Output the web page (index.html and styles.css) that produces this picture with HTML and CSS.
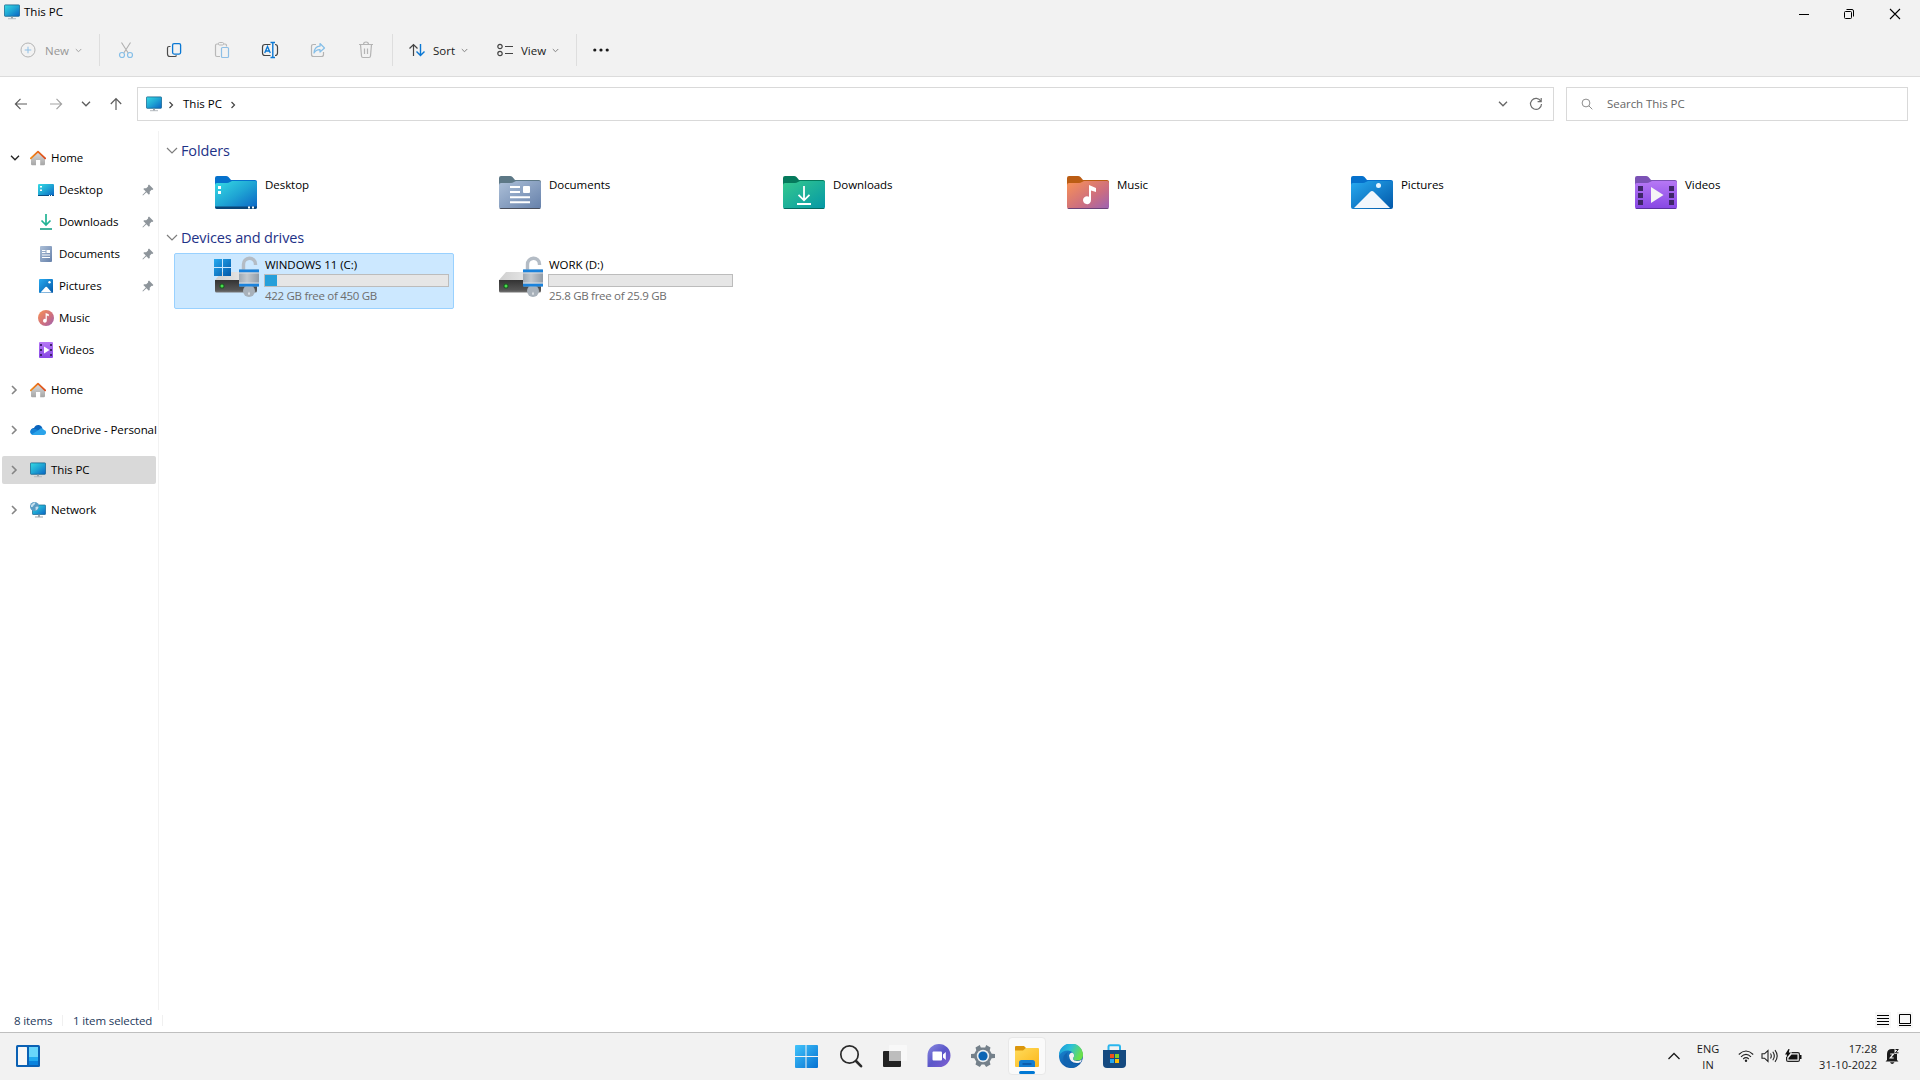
FILE: index.html
```
<!DOCTYPE html>
<html lang="en">
<head>
    <meta charset="UTF-8">
    <meta name="viewport" content="width=device-width, initial-scale=1.0">
    <title>This PC</title>
    <link rel="stylesheet" href="styles.css">
</head>
<body>

    <!-- Shared gradients and symbols -->
    <svg class="defs" width="0" height="0">
        <defs>
            <linearGradient id="gScreen" x1="0" y1="0" x2="1" y2="1"><stop offset="0" stop-color="#37dbe4"/><stop offset="0.5" stop-color="#1fa5d4"/><stop offset="1" stop-color="#0a62c4"/></linearGradient>
            <linearGradient id="gDocs" x1="0" y1="0" x2="1" y2="1"><stop offset="0" stop-color="#adc0d8"/><stop offset="1" stop-color="#6580aa"/></linearGradient>
            <linearGradient id="gDown" x1="0" y1="0" x2="1" y2="1"><stop offset="0" stop-color="#35c98e"/><stop offset="1" stop-color="#0497a6"/></linearGradient>
            <linearGradient id="gMusic" x1="0" y1="0" x2="1" y2="1"><stop offset="0" stop-color="#fa9354"/><stop offset="0.6" stop-color="#cc6e80"/><stop offset="1" stop-color="#9b62b4"/></linearGradient>
            <linearGradient id="gPics" x1="0" y1="0" x2="1" y2="1"><stop offset="0" stop-color="#27aaf0"/><stop offset="1" stop-color="#0257a8"/></linearGradient>
            <linearGradient id="gVideo" x1="0" y1="0" x2="0" y2="1"><stop offset="0" stop-color="#b678f5"/><stop offset="1" stop-color="#8646e4"/></linearGradient>
            <linearGradient id="gWin" x1="0" y1="0" x2="1" y2="1"><stop offset="0" stop-color="#42c4fb"/><stop offset="1" stop-color="#0571d2"/></linearGradient>
            <linearGradient id="gRoof" x1="0" y1="0" x2="1" y2="0"><stop offset="0" stop-color="#f28c1a"/><stop offset="1" stop-color="#dc4a1f"/></linearGradient>
            <linearGradient id="gWall" x1="0" y1="0" x2="0" y2="1"><stop offset="0" stop-color="#dedede"/><stop offset="1" stop-color="#a6a6a6"/></linearGradient>
            <linearGradient id="gTop" x1="0" y1="0" x2="1" y2="0"><stop offset="0" stop-color="#cfcfcf"/><stop offset="1" stop-color="#f2f2f2"/></linearGradient>
            <linearGradient id="gDrive" x1="0" y1="0" x2="0" y2="1"><stop offset="0" stop-color="#333"/><stop offset="0.8" stop-color="#555"/><stop offset="1" stop-color="#777"/></linearGradient>
            <linearGradient id="gLock" x1="0" y1="0" x2="1" y2="0"><stop offset="0" stop-color="#9fa9b3"/><stop offset="0.4" stop-color="#c2c8ce"/><stop offset="1" stop-color="#929ca7"/></linearGradient>
            <linearGradient id="gChat" x1="0" y1="0" x2="1" y2="1"><stop offset="0" stop-color="#8b8be0"/><stop offset="0.5" stop-color="#5b57c9"/><stop offset="1" stop-color="#8260d2"/></linearGradient>
            <linearGradient id="gEdge" x1="0" y1="0" x2="1" y2="0.4"><stop offset="0" stop-color="#1593dc"/><stop offset="0.5" stop-color="#2dc0d8"/><stop offset="1" stop-color="#6be04c"/></linearGradient>
            <linearGradient id="gEdge2" x1="0" y1="0" x2="0.6" y2="1"><stop offset="0" stop-color="#1b93dc"/><stop offset="1" stop-color="#0d4f9f"/></linearGradient>
            <linearGradient id="gFold" x1="0" y1="0" x2="1" y2="1"><stop offset="0" stop-color="#ffdc5c"/><stop offset="1" stop-color="#fcb619"/></linearGradient>
        </defs>
        <symbol id="pc" viewBox="0 0 16 16">
            <rect x="0.4" y="0.9" width="15.2" height="11.4" rx="0.8" fill="url(#gScreen)" stroke="#15648e" stroke-width="0.8"/>
            <path d="M7 12.700h2v2H7z" fill="#9aa3aa"/><path d="M4 14.200h8v1H4z" fill="#b4babf"/>
        </symbol>
        <symbol id="home" viewBox="0 0 16 16">
            <path d="M1 7.500 8 1.500l7 6V14q0 1.200-1.200 1.200H10.200V10H6v5.200H2.200Q1 15.200 1 14z" fill="url(#gWall)"/>
            <path d="M0.800 8.300 8 1.600l7.200 6.700" fill="none" stroke="url(#gRoof)" stroke-width="1.800" stroke-linecap="round" stroke-linejoin="round"/>
        </symbol>
        <symbol id="pin" viewBox="0 0 12 12">
            <path d="M7 .6 11.400 5l-1 .9-.8-.1-1.900 2 .1 2-.9.900-2.500-2.500L1 11.600.4 11l3.400-3.400L1.300 5.100l.9-.9 2 .1 1.900-1.900-.1-.8z" fill="#8e959b"/>
        </symbol>
        <symbol id="chev-r" viewBox="0 0 8 10">
            <path d="M2 1l4 4-4 4" fill="none" stroke="currentColor" stroke-width="1.600"/>
        </symbol>
        <symbol id="chev-d" viewBox="0 0 10 6">
            <path d="M1 .8l4 4 4-4" fill="none" stroke="currentColor" stroke-width="1.300"/>
        </symbol>
        <symbol id="drive" viewBox="0 0 48 44">
            <path d="M8 17h35l1 8H1z" fill="url(#gTop)"/>
            <path d="M1 25h42v11q0 1.500-1.500 1.500h-39Q1 37.500 1 36z" fill="url(#gDrive)"/>
            <circle cx="8" cy="31" r="2.600" fill="#1c5c22"/><circle cx="8" cy="31" r="1.500" fill="#47e04c"/>
            <path d="M29.500 15V9.500a6 6 0 0 1 12-.5v1" fill="none" stroke="#b4bcc5" stroke-width="3.400"/>
            <circle cx="35" cy="36" r="6" fill="#a8b1ba"/>
            <path d="M35 36.500l1 3h-2z" fill="#f4f6f8"/>
            <rect x="25" y="14.500" width="20" height="17" rx="1" fill="url(#gLock)"/>
            <path d="M25 14.500h20v3H25zM25 28.500h20v3H25z" fill="#1b83dc"/>
            <path d="M25 17.500h20v1H25zM25 27.500h20v1H25z" fill="#d9dee3"/>
        </symbol>
    </svg>

    <!-- Title bar and command bar -->
    <header class="header">
        <div class="titlebar">
            <svg width="16" height="16"><use href="#pc"/></svg>
            <span class="title">This PC</span>
            <div class="window-buttons">
                <svg width="12" height="12" viewBox="0 0 12 12"><path d="M2 6.500h10" stroke="#000"/></svg>
                <svg width="12" height="12" viewBox="0 0 12 12" fill="none" stroke="#000"><rect x="1.500" y="3.500" width="7" height="7" rx="1"/><path d="M3.500 1.500H9Q10.500 1.500 10.500 3v5.500"/></svg>
                <svg width="12" height="12" viewBox="0 0 12 12"><path d="M1 1l10 10M11 1L1 11" stroke="#000" stroke-width="1.100"/></svg>
            </div>
        </div>
        <div class="toolbar">
            <div class="tool tool-new disabled">
                <svg width="16" height="16" viewBox="0 0 16 16" fill="none"><circle cx="8" cy="8" r="7" stroke="#b4b4b4"/><path d="M8 4.700v6.600M4.700 8h6.600" stroke="#8ebfe6"/></svg>
                <span>New</span>
                <svg class="caret" width="7" height="5" viewBox="0 0 10 6"><use href="#chev-d"/></svg>
            </div>
            <div class="sep"></div>
            <div class="icon-tools">
                <svg width="16" height="18" viewBox="0 0 16 18" fill="none"><path d="M3.500 1.500l6.700 10.500M12.500 1.500L5.800 12" stroke="#b0b0b0" stroke-width="1.100"/><circle cx="4" cy="14" r="2.500" stroke="#86bfe8" stroke-width="1.200"/><circle cx="12" cy="14" r="2.500" stroke="#86bfe8" stroke-width="1.200"/></svg>
                <svg width="16" height="18" viewBox="0 0 16 18" fill="none"><path d="M4.500 5.500H3Q1.500 5.500 1.500 7v6q0 2.500 2.500 2.500h5q1.300 0 1.300-1.300" stroke="#4a4a4a" stroke-width="1.200"/><rect x="6.600" y="2.600" width="8" height="10.500" rx="1.500" stroke="#0a78d4" stroke-width="1.300"/></svg>
                <svg width="16" height="18" viewBox="0 0 16 18" fill="none"><path d="M4.500 3H3Q1.500 3 1.500 4.500V14q0 1.500 1.500 1.500h3M9.500 3H11q1.500 0 1.500 1.500v1" stroke="#b8b8b8" stroke-width="1.200"/><rect x="4.500" y="1.500" width="5" height="2.500" rx="1" stroke="#b8b8b8"/><rect x="7.500" y="6.500" width="7" height="10" rx="1" stroke="#8ebfe6" stroke-width="1.200"/></svg>
                <svg width="18" height="18" viewBox="0 0 18 18" fill="none"><path d="M9.500 3.500H4Q1.500 3.500 1.500 6v6q0 2.500 2.500 2.500h5.500M14 3.500q2.500 0 2.500 2.500v6q0 2.500-2.500 2.500" stroke="#444" stroke-width="1.200"/><path d="M3.700 12L6.500 5.500 9.300 12M4.700 10h3.600" stroke="#0a78d4" stroke-width="1.300"/><path d="M11.800 1.500v15M9.500 1.500h4.500M9.500 16.500h4.500" stroke="#0a78d4" stroke-width="1.400"/></svg>
                <svg width="16" height="18" viewBox="0 0 16 18" fill="none"><path d="M6 3.500H3.500Q1.500 3.500 1.500 5.500v8q0 2 2 2h8q2 0 2-2V11" stroke="#b4b4b4" stroke-width="1.200"/><path d="M10 2.500l4.500 4.500-4.500 4V8.700Q6 8.500 4 12 4.500 5.500 10 5.200z" stroke="#86bfe8" stroke-width="1.200" stroke-linejoin="round"/></svg>
                <svg width="16" height="18" viewBox="0 0 16 18" fill="none" stroke="#b4b4b4" stroke-width="1.200"><path d="M1 3.500h14M5.500 3.500Q5.500 1 8 1t2.500 2.500M2.500 3.500l1 11.500q.1 1.500 1.500 1.500h6q1.400 0 1.500-1.500l1-11.500M6.500 7.500v5.500M9.500 7.500v5.500"/></svg>
            </div>
            <div class="sep"></div>
            <div class="tool tool-sort">
                <svg width="18" height="16" viewBox="0 0 18 16" fill="none" stroke-width="1.200"><path d="M5.500 14V2.500M1.500 6.500l4-4 4 4" stroke="#444"/><path d="M12.500 2v11.500M8.500 9.500l4 4 4-4" stroke="#0a78d4" stroke-width="1.400"/></svg>
                <span>Sort</span>
                <svg class="caret" width="7" height="5" viewBox="0 0 10 6"><use href="#chev-d"/></svg>
            </div>
            <div class="tool tool-view">
                <svg width="18" height="16" viewBox="0 0 18 16" fill="none" stroke="#444" stroke-width="1.200"><circle cx="4" cy="4.500" r="2.200"/><circle cx="4" cy="11.500" r="2.200"/><path d="M9 4.500h8M9 11.500h8"/></svg>
                <span>View</span>
                <svg class="caret" width="7" height="5" viewBox="0 0 10 6"><use href="#chev-d"/></svg>
            </div>
            <div class="sep"></div>
            <svg class="more" width="18" height="6" viewBox="0 0 18 6" fill="#1a1a1a"><circle cx="2.800" cy="3" r="1.600"/><circle cx="9" cy="3" r="1.600"/><circle cx="15.200" cy="3" r="1.600"/></svg>
        </div>
    </header>

    <!-- Address and search -->
    <div class="navbar">
        <div class="nav-buttons">
            <svg width="14" height="14" viewBox="0 0 14 14" fill="none" stroke="#5c5c5c" stroke-width="1.200"><path d="M1.500 7h11.500M6.500 1.800L1.400 7l5.100 5.200"/></svg>
            <svg width="14" height="14" viewBox="0 0 14 14" fill="none" stroke="#a3a3a3" stroke-width="1.200"><path d="M1 7h11.500M7.500 1.800L12.600 7l-5.100 5.200"/></svg>
            <svg class="recent" width="10" height="6"><use href="#chev-d"/></svg>
            <svg width="14" height="14" viewBox="0 0 14 14" fill="none" stroke="#5c5c5c" stroke-width="1.200"><path d="M7 13V1.800M1.800 7L7 1.700 12.200 7"/></svg>
        </div>
        <div class="address">
            <svg width="16" height="16"><use href="#pc"/></svg>
            <svg class="crumb" width="6" height="8" viewBox="0 0 8 10"><use href="#chev-r"/></svg>
            <span>This PC</span>
            <svg class="crumb last" width="6" height="8" viewBox="0 0 8 10"><use href="#chev-r"/></svg>
            <svg class="history" width="10" height="6"><use href="#chev-d"/></svg>
            <svg class="refresh" width="14" height="14" viewBox="0 0 14 14" fill="none" stroke="#6e6e6e" stroke-width="1.200"><path d="M11.800 4.200A5.500 5.500 0 1 0 12.500 7M12.200 1v3.600H8.600"/></svg>
        </div>
        <div class="search">
            <svg width="12" height="12" viewBox="0 0 12 12" fill="none" stroke="#8d8d8d"><circle cx="5" cy="5" r="3.900"/><path d="M7.800 7.800l3.500 3.500"/></svg>
            <span>Search This PC</span>
        </div>
    </div>

    <main class="main">
        <!-- Navigation pane -->
        <nav class="sidebar">
            <div class="node open"><svg class="arrow" width="10" height="6"><use href="#chev-d"/></svg><svg width="16" height="16"><use href="#home"/></svg><span>Home</span></div>
            <div class="node child">
                <svg width="16" height="16" viewBox="0 0 16 16"><rect y="2" width="16" height="12" rx="1" fill="url(#gScreen)"/><path d="M0 13h16v.5q0 .5-.5.5h-15q-.5 0-.5-.5z" fill="#0a4f86"/><path d="M2 4h2v1.500H2zM2 7.500h2V9H2zM11 13h1v1h-1zM13 13h1v1h-1z" fill="#fff"/></svg>
                <span>Desktop</span><svg class="pin" width="12" height="12"><use href="#pin"/></svg>
            </div>
            <div class="node child">
                <svg width="16" height="16" viewBox="0 0 16 16" fill="none"><path d="M8 0v10.500M3.500 6.500L8 11l4.500-4.500" stroke="#22b394" stroke-width="1.700"/><path d="M2 15h12" stroke="#14a085" stroke-width="1.600"/></svg>
                <span>Downloads</span><svg class="pin" width="12" height="12"><use href="#pin"/></svg>
            </div>
            <div class="node child">
                <svg width="16" height="16" viewBox="0 0 16 16"><rect x="2" width="12" height="16" rx="1" fill="url(#gDocs)"/><path d="M4 4.500h3.500M4 6.500h3.500M4 9h8M4 11.500h8" stroke="#fff"/><path d="M8.500 4H12v3H8.500z" fill="#fff"/></svg>
                <span>Documents</span><svg class="pin" width="12" height="12"><use href="#pin"/></svg>
            </div>
            <div class="node child">
                <svg width="16" height="16" viewBox="0 0 16 16"><rect x="1" y="1" width="14" height="14" rx="1" fill="url(#gPics)"/><path d="M2.500 14.500L7.500 9q.7-.7 1.400 0l4.900 5.500z" fill="#fff"/><circle cx="11.500" cy="4.300" r="1.200" fill="#fff"/></svg>
                <span>Pictures</span><svg class="pin" width="12" height="12"><use href="#pin"/></svg>
            </div>
            <div class="node child">
                <svg width="16" height="16" viewBox="0 0 16 16"><circle cx="8" cy="8" r="8" fill="url(#gMusic)"/><path d="M7.600 3l3.200 1.200v2L8.800 5.600v5A1.900 1.900 0 1 1 7.600 9z" fill="#fff"/></svg>
                <span>Music</span>
            </div>
            <div class="node child">
                <svg width="16" height="16" viewBox="0 0 16 16"><rect x="1" width="14" height="16" rx="1" fill="url(#gVideo)"/><path d="M2 2h2v2H2zM2 7h2v2H2zM2 12h2v2H2zM12 2h2v2h-2zM12 7h2v2h-2zM12 12h2v2h-2z" fill="#40236f"/><path d="M6 4.500L11.500 8 6 11.500z" fill="#fff"/></svg>
                <span>Videos</span>
            </div>
            <div class="node root"><svg class="arrow" width="8" height="10"><use href="#chev-r"/></svg><svg width="16" height="16"><use href="#home"/></svg><span>Home</span></div>
            <div class="node root">
                <svg class="arrow" width="8" height="10"><use href="#chev-r"/></svg>
                <svg width="16" height="16" viewBox="0 0 16 16"><path d="M1 10.500Q-.3 6.500 4 6 5.500 2.400 9 3q2.500.4 3.500 3.200L8 11z" fill="#0a64bd"/><path d="M3 13q-2.500-.5-3-3 1-3.500 4.500-3.300l4 1.600L3 13z" fill="#1482d6"/><path d="M3 13q-.8 0-1.500-.5L9 7.800q3-3 5 .2 2.500.5 2 3.200-.5 1.800-2.200 1.800z" fill="#2ba4ea"/></svg>
                <span>OneDrive - Personal</span>
            </div>
            <div class="node root selected"><svg class="arrow" width="8" height="10"><use href="#chev-r"/></svg><svg width="16" height="16"><use href="#pc"/></svg><span>This PC</span></div>
            <div class="node root">
                <svg class="arrow" width="8" height="10"><use href="#chev-r"/></svg>
                <svg width="16" height="16" viewBox="0 0 16 16"><rect x="2.500" y="3" width="13" height="9.500" rx=".6" fill="url(#gScreen)" stroke="#15648e" stroke-width=".7"/><path d="M8 12.700h2v2H8zM5 14.600h8v1H5z" fill="#9aa3aa"/><circle cx="4.500" cy="4.500" r="4.500" fill="#5b9cc4"/><path d="M1 3q2.500-3 4-2.500Q6 2 3.500 3.500 3 5.500 1 5zM5.500 5q2-1 3 0-.5 2.500-2.800 3.500z" fill="#c4e0ee"/></svg>
                <span>Network</span>
            </div>
        </nav>

        <!-- Files and drives -->
        <section class="content">
            <h2 class="group"><svg width="12" height="8" viewBox="0 0 12 8"><path d="M1 1l5 5 5-5" fill="none" stroke="#7d7d7d" stroke-width="1.200"/></svg>Folders</h2>
            <div class="tiles folders">
                <div class="tile">
                    <svg width="42" height="34" viewBox="0 0 42 34"><path d="M0 2q0-2 2-2h9q1.500 0 2.500 1l2.500 3H40q2 0 2 2v4H0z" fill="#0671cc"/><path d="M0 9q0-2 2-2h10q1.500 0 3-1l2-1H40q2 0 2 2v24q0 2-2 2H2q-2 0-2-2z" fill="url(#gScreen)"/><path d="M0 30.500h42v.5q0 2-2 2H2q-2 0-2-2z" fill="#0a4577"/><path d="M3 10h3v3H3zM3 15h3v3H3zM33 30.500h2v2h-2zM37 30.500h2v2h-2z" fill="#fff"/></svg>
                    <span>Desktop</span>
                </div>
                <div class="tile">
                    <svg width="42" height="34" viewBox="0 0 42 34"><path d="M0 2q0-2 2-2h9q1.500 0 2.500 1l2.500 3H40q2 0 2 2v4H0z" fill="#5d7886"/><path d="M0 9q0-2 2-2h10q1.500 0 3-1l2-1H40q2 0 2 2v24q0 2-2 2H2q-2 0-2-2z" fill="url(#gDocs)"/><path d="M.5 32h41q-.5 1-1.500 1H2q-1 0-1.500-1z" fill="#4a4f5c"/><path d="M11 11h10M11 16h10M11 21.200h20M11 26.200h20" stroke="#fff" stroke-width="2"/><rect x="24" y="10" width="7" height="7" rx="1" fill="#fff"/></svg>
                    <span>Documents</span>
                </div>
                <div class="tile">
                    <svg width="42" height="34" viewBox="0 0 42 34"><path d="M0 2q0-2 2-2h9q1.500 0 2.500 1l2.500 3H40q2 0 2 2v4H0z" fill="#057a5c"/><path d="M0 9q0-2 2-2h10q1.500 0 3-1l2-1H40q2 0 2 2v24q0 2-2 2H2q-2 0-2-2z" fill="url(#gDown)"/><path d="M.5 32h41q-.5 1-1.500 1H2q-1 0-1.500-1z" fill="#05695f"/><path d="M21 10v14M15.500 18.800l5.500 5.500 5.500-5.500M14 28h14" stroke="#fff" stroke-width="1.800" fill="none"/></svg>
                    <span>Downloads</span>
                </div>
                <div class="tile">
                    <svg width="42" height="34" viewBox="0 0 42 34"><path d="M0 2q0-2 2-2h9q1.500 0 2.500 1l2.500 3H40q2 0 2 2v4H0z" fill="#bb5d14"/><path d="M0 9q0-2 2-2h10q1.500 0 3-1l2-1H40q2 0 2 2v24q0 2-2 2H2q-2 0-2-2z" fill="url(#gMusic)"/><path d="M.5 32h41q-.5 1-1.500 1H2q-1 0-1.500-1z" fill="#6b4278"/><path d="M22 9l7 3v4l-5-1.500V24a4 4 0 1 1-2-3.300z" fill="#fff"/></svg>
                    <span>Music</span>
                </div>
                <div class="tile">
                    <svg width="42" height="34" viewBox="0 0 42 34"><path d="M0 2q0-2 2-2h9q1.500 0 2.500 1l2.500 3H40q2 0 2 2v4H0z" fill="#0671cc"/><path d="M0 9q0-2 2-2h10q1.500 0 3-1l2-1H40q2 0 2 2v24q0 2-2 2H2q-2 0-2-2z" fill="url(#gPics)"/><path d="M3 32L19 16q2-2 4 0l16 16z" fill="#f2f7fc"/><circle cx="27.500" cy="9.500" r="2.500" fill="#e8f6ff"/></svg>
                    <span>Pictures</span>
                </div>
                <div class="tile">
                    <svg width="42" height="34" viewBox="0 0 42 34"><path d="M0 2q0-2 2-2h9q1.500 0 2.500 1l2.500 3H40q2 0 2 2v4H0z" fill="#7b52b5"/><path d="M0 9q0-2 2-2h10q1.500 0 3-1l2-1H40q2 0 2 2v24q0 2-2 2H2q-2 0-2-2z" fill="url(#gVideo)"/><path d="M.5 32h41q-.5 1-1.500 1H2q-1 0-1.500-1z" fill="#5b31a0"/><path d="M3 10h5v5H3zM3 17h5v5H3zM3 24h5v5H3zM34 10h5v5h-5zM34 17h5v5h-5zM34 24h5v5h-5z" fill="#3e2668"/><path d="M16 11l12.500 8L16 27z" fill="#f5f5f5"/></svg>
                    <span>Videos</span>
                </div>
            </div>

            <h2 class="group">
                <svg width="12" height="8" viewBox="0 0 12 8"><path d="M1 1l5 5 5-5" fill="none" stroke="#7d7d7d" stroke-width="1.200"/></svg>Devices and drives
            </h2>
            <div class="tiles drives">
                <div class="drive active">
                    <svg width="48" height="44" viewBox="0 0 48 44"><use href="#drive" width="48" height="44"/><path d="M0 4h8v8H0zM9 4h8v8H9zM0 13h8v8H0zM9 13h8v8H9z" fill="url(#gPics)"/></svg>
                    <div class="drive-info">
                        <span>WINDOWS 11 (C:)</span>
                        <div class="bar"><div class="used" style="width: 6.5%"></div></div>
                        <span class="free">422 GB free of 450 GB</span>
                    </div>
                </div>
                <div class="drive">
                    <svg width="48" height="44"><use href="#drive"/></svg>
                    <div class="drive-info">
                        <span>WORK (D:)</span>
                        <div class="bar"></div>
                        <span class="free">25.8 GB free of 25.9 GB</span>
                    </div>
                </div>
            </div>
        </section>
    </main>

    <footer class="statusbar">
        <span class="count">8 items</span>
        <span class="picked">1 item selected</span>
        <div class="layouts">
            <svg width="16" height="16" viewBox="0 0 16 16"><rect width="16" height="16" fill="#f7f7f7"/><path d="M2 3.500h12M2 6.500h12M2 9.500h12M2 12.500h12" stroke="#000"/></svg>
            <svg width="16" height="16" viewBox="0 0 16 16"><rect width="16" height="16" fill="#f7f7f7"/><path d="M2.500 2.500h11v9h-11zM2 13.500h12" fill="none" stroke="#000"/></svg>
        </div>
    </footer>

    <!-- Taskbar -->
    <div class="taskbar">
        <div class="widgets">
            <svg width="24" height="22" viewBox="0 0 24 22"><rect width="24" height="22" rx="1.500" fill="#0b61b4"/><rect x="2" y="2" width="9" height="18" rx=".5" fill="#f7f7f7"/><path d="M13 2h9v10h-9z" fill="#69d6fb"/><path d="M13 12h9v4h-9z" fill="#22abf0"/><path d="M13 16h9v4h-9z" fill="#0a83de"/></svg>
        </div>
        <div class="apps">
            <div class="app start"><svg width="24" height="24" viewBox="0 0 24 24"><path d="M1 2q0-1 1-1h9.500v11H1zM12.500 1H23q1 0 1 1v10H12.500zM1 13h10.500v11H2q-1 0-1-1zM12.500 13H24v10q0 1-1 1H12.500z" fill="url(#gWin)"/></svg></div>
            <div class="app"><svg width="24" height="24" viewBox="0 0 24 24"><path d="M16.500 16.500l5.500 5.700" stroke="#2a2a2a" stroke-width="2.600" stroke-linecap="round"/><circle cx="10.500" cy="10.500" r="8.700" fill="#f2f2f2" stroke="#2a2a2a" stroke-width="1.700"/></svg></div>
            <div class="app"><svg width="24" height="24" viewBox="0 0 24 24"><rect y="7" width="18" height="16" rx="1" fill="#232323"/><rect x="6" y="1" width="18" height="16" rx="1" fill="#f8f8f8"/><path d="M6 7h12v10H6z" fill="#bdbdbd"/></svg></div>
            <div class="app"><svg width="24" height="24" viewBox="0 0 24 24"><path d="M.5 23V11.500A11.500 11.500 0 1 1 12 23z" fill="url(#gChat)"/><rect x="5.500" y="7.500" width="9.500" height="9" rx="1" fill="#fff"/><path d="M16 10.500l2.800-2.500v8L16 13.500z" fill="#fff"/></svg></div>
            <div class="app"><svg width="24" height="24" viewBox="0 0 24 24"><path d="M8.800 1l1 2.500h4.400l1-2.500 4.300 2.400-.8 2.900 2 3.400 3.300.2v4.200l-3.300.2-2 3.400.8 2.900-4.300 2.400-1.800-2.400h-2.800L8.800 23l-4.300-2.400.8-2.900-2-3.400L0 14.100V9.900l3.300-.2 2-3.400-.8-2.900z" fill="#74808a"/><circle cx="12" cy="12" r="6.200" fill="#e9edf0"/><circle cx="12" cy="12" r="4.600" fill="#0a64b4"/></svg></div>
            <div class="app running"><svg width="24" height="24" viewBox="0 0 24 24"><path d="M0 3q0-1 1-1h8l2 2-1 3H0z" fill="#db960c"/><path d="M0 6.500h8L11 4h12q1 0 1 1v17q0 1-1 1H1q-1 0-1-1z" fill="url(#gFold)"/><path d="M4 23v-4.500q0-2.500 2.500-2.500h11q2.500 0 2.500 2.500V23z" fill="#147dd0"/><path d="M7.500 20h9" stroke="#0b56a2" stroke-width="1.600"/></svg></div>
            <div class="app"><svg width="24" height="24" viewBox="0 0 24 24"><circle cx="12" cy="12" r="12" fill="url(#gEdge2)"/><path d="M0 11.500A12 12 0 0 1 24 11q0 5.500-6 5.500-4 0-4-2 1.500-1.500 1-4Q13.500 7 9 6.500 3 6.500 0 11.500z" fill="url(#gEdge)"/><path d="M10 11.500q.5-2.500 3-3 2.500 1.200 2 4-1.200 1.600-1 2.700.6 1.800 4 1.800 2.300 0 5-1.500L21.500 18.500Q11 21 10 11.500z" fill="#f2f2f2"/><path d="M4.500 17.500Q3 11 9 8q-2 3-.2 8Q12 21 18.500 19.500L21 18.500q-3.500 5.500-9 5.500-5-1-7.500-6.500z" fill="#1164b0"/></svg></div>
            <div class="app store"><svg width="24" height="24" viewBox="0 0 24 24"><path d="M6.500 6V2.500Q6.500 1.200 8 1.200h8.500q1.500 0 1.500 1.300V6" fill="none" stroke="#2bb6ee" stroke-width="2"/><path d="M1 6h23v14q0 4-4 4H5q-4 0-4-4z" fill="#154a80"/><path d="M8 10h4v4H8z" fill="#f1511b"/><path d="M13 10h4v4h-4z" fill="#80cc28"/><path d="M8 15h4v4H8z" fill="#25a8ef"/><path d="M13 15h4v4h-4z" fill="#fbbc09"/></svg></div>
        </div>
        <div class="tray">
            <svg class="up" width="14" height="8" viewBox="0 0 14 8"><path d="M1.500 7L7 1.500 12.500 7" fill="none" stroke="#1a1a1a" stroke-width="1.300"/></svg>
            <div class="lang"><span>ENG</span><span>IN</span></div>
            <div class="status-icons">
                <svg width="16" height="14" viewBox="0 0 16 14" fill="none" stroke="#222" stroke-width="1.100"><path d="M.8 5.500q7.200-7 14.400 0M3 7.800q5-4.800 10 0M5.200 10q2.800-2.600 5.600 0"/><circle cx="8" cy="11.800" r="1.200" fill="#222" stroke="none"/></svg>
                <svg width="17" height="14" viewBox="0 0 17 14" fill="none" stroke="#222" stroke-width="1.100"><path d="M1 4.800h2.500L7 1.500v11L3.500 9.200H1zM9.500 4.500q1.600 2.500 0 5M11.800 2.800q3 4.200 0 8.400M14 1.200q4.400 5.800 0 11.600"/></svg>
                <svg width="17" height="14" viewBox="0 0 17 14"><path d="M6.500 3.600h6.400q1.500 0 1.500 1.500v5.800q0 1.500-1.500 1.500H3.100q-1.500 0-1.500-1.500V8" fill="none" stroke="#222" stroke-width="1.200"/><path d="M6.500 5.500H12.500v5h-9V9z" fill="#111"/><path d="M15 6h1.500v4H15z" fill="#111"/><path d="M3.500 0L0 5.500h2L1.500 9 6 3.500H3.800L4.500 0z" fill="#111"/></svg>
            </div>
            <div class="clock"><span>17:28</span><span>31-10-2022</span></div>
            <svg class="bell" width="15" height="16" viewBox="0 0 15 16"><path d="M2 12V6Q2 1 7 1h2.500v5H12v6l1.500 1.500H.5zM5 14.300h4.500Q8.500 16 7.200 16T5 14.300z" fill="#1a1a1a"/><path d="M5.200 6h3.300L5.200 10h3.500" fill="none" stroke="#f2f2f2" stroke-width="1.200"/><path d="M10.500 1.500H13.300L10.500 4.800h3" fill="none" stroke="#1a1a1a"/></svg>
        </div>
    </div>

</body>
</html>
```
FILE: styles.css
```
* { box-sizing: border-box; }
body { margin: 0; width: 1920px; height: 1080px; overflow: hidden; display: flex; flex-direction: column; background: #fff; color: #000; font-family: "Open Sans", "Noto Sans", sans-serif; font-size: 11.5px; line-height: 16px; }
svg { display: block; flex: none; }
span { white-space: nowrap; }
.defs { height: 0; }

/* Title bar + command bar */
.header { height: 77px; flex: none; background: #f2f2f2; border-bottom: 1px solid #dcdcdc; }
.titlebar { display: flex; align-items: center; height: 24px; padding-left: 4px; }
.titlebar .title { margin: 0 0 1px 4px; }
.window-buttons { display: flex; gap: 34px; margin: 4px 19px 0 auto; }
.toolbar { display: flex; align-items: center; height: 52px; padding-left: 20px; }
.tool { display: flex; align-items: center; color: #1a1a1a; }
.tool span { margin-top: 2px; }
.tool .caret { color: #777; margin-left: 6px; }
.tool-new { width: 79px; }
.tool-new span { margin-left: 9px; }
.tool-new svg:first-child { margin-bottom: 1px; }
.disabled { color: #979797; }
.disabled .caret { color: #999; }
.sep { width: 1px; height: 32px; background: #dedede; }
.icon-tools { display: grid; grid-template-columns: repeat(6, 48px); justify-items: center; align-items: center; width: 292px; padding-left: 2px; }
.tool-sort { width: 87px; padding-left: 15px; }
.tool-view { width: 96px; padding-left: 16px; }
.tool-sort span, .tool-view span { margin-left: 7px; }
.tool-sort .caret, .tool-view .caret { margin-left: 6px; }
.more { margin-left: 15px; }

/* Address bar */
.navbar { display: flex; align-items: center; height: 54px; padding: 0 12px; flex: none; }
.nav-buttons { display: flex; align-items: center; width: 125px; padding-left: 2px; gap: 21px; }
.nav-buttons .recent { color: #5c5c5c; margin: 0 -3px 0 -3px; }
.address, .search { display: flex; align-items: center; height: 34px; border: 1px solid #d9d9d9; }
.address { width: 1417px; padding: 0 10px 0 8px; }
.address .crumb { color: #444; margin: 1px 9px 0 6px; }
.address .last { margin-left: 8px; }
.address .history { margin-left: auto; color: #666; }
.address .refresh { margin-left: 21px; }
.search { width: 342px; margin-left: 12px; padding-left: 14px; gap: 14px; color: #666; letter-spacing: -0.05px; }

/* Navigation pane */
.main { display: flex; flex: 1; min-height: 0; }
.sidebar { width: 159px; padding: 13px 2px 0; border-right: 1px solid #f2f2f2; flex: none; }
.node { display: flex; align-items: center; height: 28px; margin-bottom: 4px; width: 154px; padding-left: 28px; border-radius: 2px; }
.node span { margin-left: 5px; letter-spacing: -0.07px; }
.node.open, .node.root { padding-left: 8px; }
.node.open .arrow { color: #222; margin: 0 10px 0 0; }
.node.child { padding-left: 36px; }
.node.child + .root { margin-top: 12px; }
.node.root { margin-bottom: 12px; }
.node.root .arrow { color: #858585; margin-right: 12px; }
.node.selected { background: #d9d9d9; }
.pin { margin: 0 2px 0 auto; }

/* File list */
.content { flex: 1; padding-left: 7px; }
.group { display: flex; align-items: center; gap: 3px; height: 20px; margin: 10px 0 0; font-size: 14.5px; font-weight: normal; letter-spacing: -0.15px; color: #1e3287; }
.tiles { display: grid; grid-template-columns: repeat(6, 284px); margin-left: 8px; }
.folders { height: 67px; padding-top: 15px; }
.tile { display: flex; padding-left: 41px; gap: 8px; letter-spacing: -0.05px; }
.tile span { margin-top: 1px; }
.folders + .group { margin-top: 0; }
.drives { margin-top: 5px; }
.drive { display: flex; width: 280px; height: 56px; padding: 2px 4px 0 39px; border: 1px solid transparent; border-radius: 2px; }
.drive > svg { margin-top: -1px; }
.drive.active { background: #cce8ff; border-color: #99d1ff; }
.drive-info { display: flex; flex-direction: column; width: 185px; margin-left: 2px; padding-top: 1px; flex: none; }
.drive-info span { padding-left: 1px; letter-spacing: -0.05px; }
.bar { height: 13px; margin: 1px 0; background: #e6e6e6; border: 1px solid #bcbcbc; }
.used { height: 100%; background: #26a0da; }
.drive-info .free { color: #6d6d6d; letter-spacing: -0.3px; }

/* Status bar */
.statusbar { display: flex; align-items: center; height: 22px; flex: none; color: #1e395b; padding: 0 7px 2px 14px; letter-spacing: -0.12px; }
.count { width: 49px; border-right: 1px solid #f0f0f0; line-height: 11px; }
.picked { width: 100px; padding-left: 10px; border-right: 1px solid #f0f0f0; line-height: 11px; }
.layouts { display: flex; gap: 6px; margin-left: auto; }

/* Taskbar */
.taskbar { display: grid; grid-template-columns: 1fr 352px 1fr; align-items: center; height: 48px; flex: none; background: #f2f2f2; border-top: 1px solid #bfbfbf; }
.widgets { padding: 0 0 2px 16px; }
.apps { display: flex; margin-bottom: 1px; }
.app { position: relative; display: flex; align-items: center; justify-content: center; width: 38px; height: 38px; margin: 0 2px 0 4px; padding-bottom: 1px; border-radius: 4px; }
.start, .store { margin: 0 3px; }
.running { background: #fafafa; border: 1px solid #e8e8e8; }
.running::after { content: ""; position: absolute; bottom: 0; left: 10px; width: 16px; height: 3px; border-radius: 2px; background: #0078d4; }
.tray { display: flex; align-items: center; justify-content: flex-end; padding: 0 20px 1px 0; font-size: 11px; color: #1a1a1a; }
.up { margin-bottom: 1px; }
.lang, .clock { display: flex; flex-direction: column; padding-top: 1px; }
.lang { align-items: center; width: 24px; margin: 0 18px 0 15px; }
.status-icons { display: flex; gap: 7px; margin-bottom: 1px; }
.clock { align-items: flex-end; width: 75px; letter-spacing: 0.05px; }
.bell { margin-left: 8px; }
```
